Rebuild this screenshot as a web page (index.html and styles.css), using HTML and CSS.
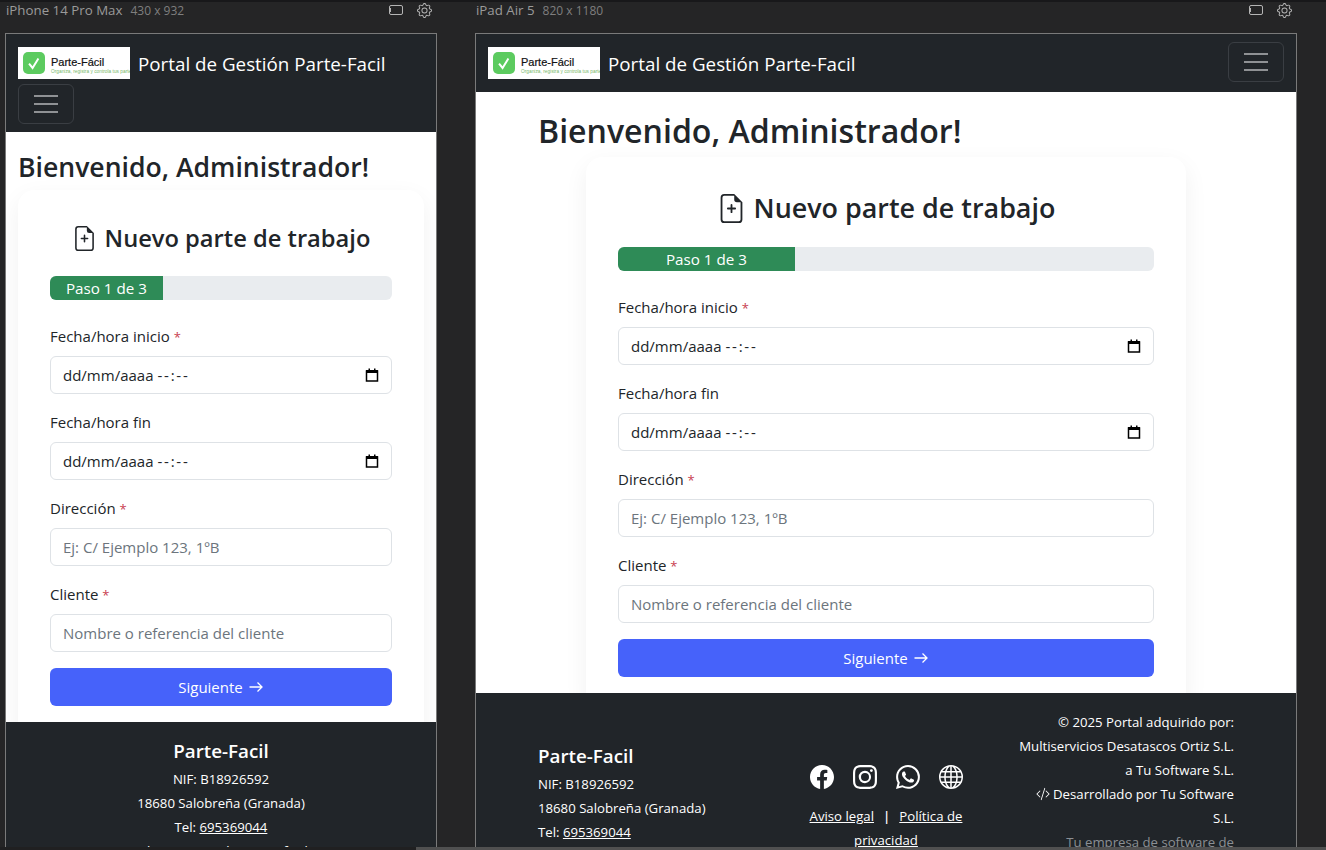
FILE: index.html
```html
<!DOCTYPE html>
<html lang="es">
<head>
    <meta charset="UTF-8">
    <title>Portal de Gestión Parte-Facil</title>
    <link rel="stylesheet" href="styles.css">
</head>
<body>
    <svg class="icon-defs" aria-hidden="true">
        <symbol id="i-frame" viewBox="0 0 14 10"><rect x=".5" y=".5" width="13" height="9" rx="1.5" fill="none" stroke="currentColor"/><path d="M1.5 3v4" stroke="currentColor"/></symbol>
        <symbol id="i-gear" viewBox="0 0 16 16"><path d="M8 4.754a3.246 3.246 0 1 0 0 6.492 3.246 3.246 0 0 0 0-6.492M5.754 8a2.246 2.246 0 1 1 4.492 0 2.246 2.246 0 0 1-4.492 0"/><path d="M9.796 1.343c-.527-1.79-3.065-1.79-3.592 0l-.094.319a.873.873 0 0 1-1.255.52l-.292-.16c-1.64-.892-3.433.902-2.54 2.541l.159.292a.873.873 0 0 1-.52 1.255l-.319.094c-1.79.527-1.79 3.065 0 3.592l.319.094a.873.873 0 0 1 .52 1.255l-.16.292c-.892 1.64.901 3.434 2.541 2.54l.292-.159a.873.873 0 0 1 1.255.52l.094.319c.527 1.79 3.065 1.79 3.592 0l.094-.319a.873.873 0 0 1 1.255-.52l.292.16c1.64.893 3.434-.902 2.54-2.541l-.159-.292a.873.873 0 0 1 .52-1.255l.319-.094c1.79-.527 1.79-3.065 0-3.592l-.319-.094a.873.873 0 0 1-.52-1.255l.16-.292c.893-1.64-.902-3.433-2.541-2.54l-.292.159a.873.873 0 0 1-1.255-.52zm-2.633.283c.246-.835 1.428-.835 1.674 0l.094.319a1.873 1.873 0 0 0 2.693 1.115l.291-.16c.764-.415 1.6.42 1.184 1.185l-.159.292a1.873 1.873 0 0 0 1.116 2.692l.318.094c.835.246.835 1.428 0 1.674l-.319.094a1.873 1.873 0 0 0-1.115 2.693l.16.291c.415.764-.42 1.6-1.185 1.184l-.291-.159a1.873 1.873 0 0 0-2.693 1.116l-.094.318c-.246.835-1.428.835-1.674 0l-.094-.319a1.873 1.873 0 0 0-2.692-1.115l-.292.16c-.764.415-1.6-.42-1.184-1.185l.159-.291A1.873 1.873 0 0 0 1.945 8.93l-.319-.094c-.835-.246-.835-1.428 0-1.674l.319-.094A1.873 1.873 0 0 0 3.06 4.377l-.16-.292c-.415-.764.42-1.6 1.185-1.184l.292.159a1.873 1.873 0 0 0 2.692-1.115z"/></symbol>
        <symbol id="i-file" viewBox="0 0 16 16"><path d="M8.5 6a.5.5 0 0 0-1 0v1.500H6a.5.5 0 0 0 0 1h1.500V10a.5.5 0 0 0 1 0V8.500H10a.5.5 0 0 0 0-1H8.500z"/><path d="M14 4.500V14a2 2 0 0 1-2 2H4a2 2 0 0 1-2-2V2a2 2 0 0 1 2-2h5.500zm-3 0A1.500 1.500 0 0 1 9.500 3V1H4a1 1 0 0 0-1 1v12a1 1 0 0 0 1 1h8a1 1 0 0 0 1-1V4.500z"/></symbol>
        <symbol id="i-cal" viewBox="0 0 14 14"><path d="M1.500 3h11v10h-11z" fill="none" stroke="#000" stroke-width="1.500"/><path d="M1 2h12v3H1zM3.500 .6H5v2H3.500zM9 .6h1.500v2H9z"/></symbol>
        <symbol id="i-arrow" viewBox="0 0 16 16"><path d="M1.500 8H14M9.500 3.500L14 8l-4.500 4.500" fill="none" stroke="currentColor" stroke-width="1.300"/></symbol>
        <symbol id="i-check" viewBox="0 0 20 20"><path d="M5.500 10.500l3.200 4 5.300-8.500" fill="none" stroke="#fff" stroke-width="1.800"/></symbol>
        <symbol id="i-code" viewBox="0 0 16 16"><path d="M10.478 1.647a.5.5 0 1 0-.956-.294l-4 13a.5.5 0 0 0 .956.294zM4.854 4.146a.5.5 0 0 1 0 .708L1.707 8l3.147 3.146a.5.5 0 0 1-.708.708l-3.500-3.500a.5.5 0 0 1 0-.708l3.500-3.500a.5.5 0 0 1 .708 0m6.292 0a.5.5 0 0 0 0 .708L14.293 8l-3.147 3.146a.5.5 0 0 0 .708.708l3.500-3.500a.5.5 0 0 0 0-.708l-3.500-3.500a.5.5 0 0 0-.708 0"/></symbol>
    </svg>

    <div class="topline"></div>
    <div class="devices">

        <section class="device phone">
            <div class="device-bar">
                <span class="device-name">iPhone 14 Pro Max</span>
                <span class="device-size">430 x 932</span>
                <span class="device-tools">
                    <svg class="tool-frame"><use href="#i-frame"/></svg>
                    <svg class="tool-gear"><use href="#i-gear"/></svg>
                </span>
            </div>
            <div class="screen">
                <nav class="navbar navbar-wrap">
                    <div class="brand">
                        <div class="logo">
                            <svg class="logo-mark"><use href="#i-check"/></svg>
                            <span class="logo-text">
                                <span class="logo-name">Parte-Fácil</span>
                                <span class="logo-slogan">Organiza, registra y controla tus partes</span>
                            </span>
                        </div>
                        <span class="brand-title">Portal de Gestión Parte-Facil</span>
                    </div>
                    <button class="toggler"><span></span><span></span><span></span></button>
                </nav>
                <main class="content">
                    <h1 class="welcome">Bienvenido, Administrador!</h1>
                    <div class="card">
                        <h2 class="card-title">
                            <svg class="file-icon"><use href="#i-file"/></svg>
                            Nuevo parte de trabajo
                        </h2>
                        <div class="progress"><div class="progress-bar">Paso 1 de 3</div></div>
                        <div class="field">
                            <label>Fecha/hora inicio <span class="req">*</span></label>
                            <div class="input"><span>dd/mm/aaaa <span class="time">--:--</span></span><svg class="cal"><use href="#i-cal"/></svg></div>
                        </div>
                        <div class="field">
                            <label>Fecha/hora fin</label>
                            <div class="input"><span>dd/mm/aaaa <span class="time">--:--</span></span><svg class="cal"><use href="#i-cal"/></svg></div>
                        </div>
                        <div class="field">
                            <label>Dirección <span class="req">*</span></label>
                            <div class="input placeholder">Ej: C/ Ejemplo 123, 1ºB</div>
                        </div>
                        <div class="field">
                            <label>Cliente <span class="req">*</span></label>
                            <div class="input placeholder">Nombre o referencia del cliente</div>
                        </div>
                        <button class="next">Siguiente <svg class="arrow"><use href="#i-arrow"/></svg></button>
                    </div>
                </main>
                <footer class="footer footer-center">
                    <h5 class="footer-name">Parte-Facil</h5>
                    <p>NIF: B18926592</p>
                    <p>18680 Salobreña (Granada)</p>
                    <p>Tel: <a href="#">695369044</a></p>
                    <p>Email: <a href="#">soporte.web@parte-facil.es</a></p>
                </footer>
            </div>
        </section>

        <section class="device tablet">
            <div class="device-bar">
                <span class="device-name">iPad Air 5</span>
                <span class="device-size">820 x 1180</span>
                <span class="device-tools">
                    <svg class="tool-frame"><use href="#i-frame"/></svg>
                    <svg class="tool-gear"><use href="#i-gear"/></svg>
                </span>
            </div>
            <div class="screen">
                <nav class="navbar">
                    <div class="brand">
                        <div class="logo">
                            <svg class="logo-mark"><use href="#i-check"/></svg>
                            <span class="logo-text">
                                <span class="logo-name">Parte-Fácil</span>
                                <span class="logo-slogan">Organiza, registra y controla tus partes</span>
                            </span>
                        </div>
                        <span class="brand-title">Portal de Gestión Parte-Facil</span>
                    </div>
                    <button class="toggler"><span></span><span></span><span></span></button>
                </nav>
                <main class="content">
                    <h1 class="welcome">Bienvenido, Administrador!</h1>
                    <div class="card">
                        <h2 class="card-title">
                            <svg class="file-icon"><use href="#i-file"/></svg>
                            Nuevo parte de trabajo
                        </h2>
                        <div class="progress"><div class="progress-bar">Paso 1 de 3</div></div>
                        <div class="field">
                            <label>Fecha/hora inicio <span class="req">*</span></label>
                            <div class="input"><span>dd/mm/aaaa <span class="time">--:--</span></span><svg class="cal"><use href="#i-cal"/></svg></div>
                        </div>
                        <div class="field">
                            <label>Fecha/hora fin</label>
                            <div class="input"><span>dd/mm/aaaa <span class="time">--:--</span></span><svg class="cal"><use href="#i-cal"/></svg></div>
                        </div>
                        <div class="field">
                            <label>Dirección <span class="req">*</span></label>
                            <div class="input placeholder">Ej: C/ Ejemplo 123, 1ºB</div>
                        </div>
                        <div class="field">
                            <label>Cliente <span class="req">*</span></label>
                            <div class="input placeholder">Nombre o referencia del cliente</div>
                        </div>
                        <button class="next">Siguiente <svg class="arrow"><use href="#i-arrow"/></svg></button>
                    </div>
                </main>
                <footer class="footer footer-columns">
                    <div class="footer-left">
                        <h5 class="footer-name">Parte-Facil</h5>
                        <p>NIF: B18926592</p>
                        <p>18680 Salobreña (Granada)</p>
                        <p>Tel: <a href="#">695369044</a></p>
                    </div>
                    <div class="footer-mid">
                        <div class="socials">
                            <svg class="social" viewBox="0 0 16 16"><path d="M16 8.049c0-4.446-3.582-8.050-8-8.050C3.580 0-.002 3.603-.002 8.050c0 4.017 2.926 7.347 6.750 7.951v-5.625h-2.030V8.050H6.750V6.275c0-2.017 1.195-3.131 3.022-3.131.876 0 1.791.157 1.791.157v1.980h-1.009c-.993 0-1.303.621-1.303 1.258v1.510h2.218l-.354 2.326H9.250V16c3.824-.604 6.750-3.934 6.750-7.951"/></svg>
                            <svg class="social" viewBox="0 0 16 16"><path d="M8 0C5.829 0 5.556.01 4.703.048 3.850.088 3.269.222 2.760.420a3.900 3.900 0 0 0-1.417.923A3.900 3.900 0 0 0 .42 2.760C.222 3.268.087 3.850.048 4.700.010 5.555 0 5.827 0 8.001c0 2.172.010 2.444.048 3.297.04.852.174 1.433.372 1.942.205.526.478.972.923 1.417.444.445.89.719 1.416.923.51.198 1.090.333 1.942.372C5.555 15.990 5.827 16 8 16s2.444-.01 3.298-.048c.851-.04 1.434-.174 1.943-.372a3.900 3.900 0 0 0 1.416-.923c.445-.445.718-.891.923-1.417.197-.509.332-1.090.372-1.942C15.990 10.445 16 10.173 16 8s-.01-2.445-.048-3.299c-.04-.851-.175-1.433-.372-1.941a3.900 3.900 0 0 0-.923-1.417A3.900 3.900 0 0 0 13.240.42c-.510-.198-1.092-.333-1.943-.372C10.443.010 10.172 0 7.998 0zm-.717 1.442h.718c2.136 0 2.389.007 3.232.046.780.035 1.204.166 1.486.275.373.145.640.319.920.599s.453.546.598.920c.110.281.240.705.275 1.485.039.843.047 1.096.047 3.231s-.008 2.389-.047 3.232c-.035.780-.166 1.203-.275 1.485a2.500 2.500 0 0 1-.599.919c-.28.280-.546.453-.92.598-.28.110-.704.240-1.485.276-.843.038-1.096.047-3.232.047s-2.390-.009-3.233-.047c-.780-.036-1.203-.166-1.485-.276a2.500 2.500 0 0 1-.920-.598 2.500 2.500 0 0 1-.600-.920c-.109-.281-.240-.705-.275-1.485-.038-.843-.046-1.096-.046-3.233s.008-2.388.046-3.231c.036-.780.166-1.204.276-1.486.145-.373.319-.640.599-.920s.546-.453.920-.598c.282-.110.705-.240 1.485-.276.738-.034 1.024-.044 2.515-.045zm4.988 1.328a.960.960 0 1 0 0 1.920.960.960 0 0 0 0-1.920m-4.270 1.122a4.109 4.109 0 1 0 0 8.217 4.109 4.109 0 0 0 0-8.217m0 1.441a2.667 2.667 0 1 1 0 5.334 2.667 2.667 0 0 1 0-5.334"/></svg>
                            <svg class="social" viewBox="0 0 16 16"><path d="M13.601 2.326A7.850 7.850 0 0 0 7.994 0C3.627 0 .068 3.558.064 7.926c0 1.399.366 2.760 1.057 3.965L0 16l4.204-1.102a7.900 7.900 0 0 0 3.790.965h.004c4.368 0 7.926-3.558 7.930-7.930A7.900 7.900 0 0 0 13.600 2.326zM7.994 14.521a6.600 6.600 0 0 1-3.356-.920l-.24-.144-2.494.654.666-2.433-.156-.251a6.560 6.560 0 0 1-1.007-3.505c0-3.626 2.957-6.584 6.591-6.584a6.560 6.560 0 0 1 4.660 1.931 6.560 6.560 0 0 1 1.928 4.660c-.004 3.639-2.961 6.592-6.592 6.592m3.615-4.934c-.197-.099-1.170-.578-1.353-.646-.182-.065-.315-.099-.445.099-.133.197-.513.646-.627.775-.114.133-.232.148-.430.050-.197-.100-.836-.308-1.592-.985-.590-.525-.985-1.175-1.103-1.372-.114-.198-.011-.304.088-.403.087-.088.197-.232.296-.346.100-.114.133-.198.198-.330.065-.134.034-.248-.015-.347-.050-.099-.445-1.076-.612-1.470-.160-.389-.323-.335-.445-.340-.114-.007-.247-.007-.380-.007a.73.730 0 0 0-.529.247c-.182.198-.691.677-.691 1.654s.710 1.916.810 2.049c.098.133 1.394 2.132 3.383 2.992.470.205.840.326 1.129.418.475.152.904.129 1.246.080.380-.058 1.171-.480 1.338-.943.164-.464.164-.860.114-.943-.049-.084-.182-.133-.38-.232"/></svg>
                            <svg class="social" viewBox="0 0 16 16"><path d="M0 8a8 8 0 1 1 16 0A8 8 0 0 1 0 8m7.500-6.923c-.67.204-1.335.820-1.887 1.855A8 8 0 0 0 5.145 4H7.500zM4.090 4a9.300 9.300 0 0 1 .640-1.539 7 7 0 0 1 .597-.933A7.030 7.030 0 0 0 2.255 4zm-.582 3.500c.03-.877.138-1.718.312-2.500H1.674a7 7 0 0 0-.656 2.500zM4.847 5a12.500 12.500 0 0 0-.338 2.500H7.500V5zM8.500 5v2.500h2.990a12.500 12.500 0 0 0-.337-2.500zM4.510 8.500a12.500 12.500 0 0 0 .337 2.500H7.500V8.500zm3.990 0V11h2.653c.187-.765.306-1.608.338-2.500zM5.145 12q.208.580.468 1.068c.552 1.035 1.218 1.650 1.887 1.855V12zm.182 2.472a7 7 0 0 1-.597-.933A9.300 9.300 0 0 1 4.090 12H2.255a7 7 0 0 0 3.072 2.472M3.820 11a13.700 13.700 0 0 1-.312-2.500h-2.490c.062.890.291 1.733.656 2.500zm6.853 3.472A7 7 0 0 0 13.745 12H11.910a9.300 9.300 0 0 1-.640 1.539 7 7 0 0 1-.597.933M8.500 12v2.923c.67-.204 1.335-.820 1.887-1.855q.26-.487.468-1.068zm3.680-1h2.146c.365-.767.594-1.610.656-2.500h-2.490a13.700 13.700 0 0 1-.312 2.500m2.802-3.500a7 7 0 0 0-.656-2.500H12.180c.174.782.282 1.623.312 2.500zM11.270 2.461c.247.464.462.980.640 1.539h1.835a7 7 0 0 0-3.072-2.472c.218.284.418.598.597.933M10.855 4a8 8 0 0 0-.468-1.068C9.835 1.897 9.170 1.282 8.500 1.077V4z"/></svg>
                        </div>
                        <p class="legal"><a href="#">Aviso legal</a><span class="sep">|</span><a href="#">Política de privacidad</a></p>
                    </div>
                    <div class="footer-right">
                        <p>© 2025 Portal adquirido por:</p>
                        <p>Multiservicios Desatascos Ortiz S.L.</p>
                        <p>a Tu Software S.L.</p>
                        <p><svg class="code-icon"><use href="#i-code"/></svg> Desarrollado por Tu Software S.L.</p>
                        <p class="muted">Tu empresa de software de confianza</p>
                    </div>
                </footer>
            </div>
        </section>

    </div>
    <div class="scrollbar"><div class="scrollbar-thumb"></div></div>
</body>
</html>
```

FILE: styles.css
```css
* {
    box-sizing: border-box;
}

html, body {
    height: 850px;
    overflow: hidden;
}

body {
    margin: 0;
    background: #252526;
    color: #212529;
    font-family: "Open Sans", "Noto Sans", sans-serif;
    font-size: 15px;
    position: relative;
}

p, h1, h2, h5 {
    margin: 0;
}

a {
    color: inherit;
}

.icon-defs {
    display: none;
}

.topline {
    height: 2px;
    background: #18181a;
}

.devices {
    display: flex;
    gap: 38px;
    padding-left: 5px;
}

.device-bar {
    display: flex;
    align-items: center;
    height: 31px;
    padding-bottom: 15px;
    font-size: 13.3px;
    color: #9a9a9a;
}

.device-name {
    margin-right: 8px;
    margin-left: 1px;
}

.device-size {
    font-size: 12px;
    color: #7f7f7f;
}

.device-tools {
    margin-left: auto;
    display: flex;
    align-items: center;
    gap: 14px;
    padding-right: 5px;
    color: #b5b5b5;
}

.tool-frame {
    width: 14px;
    height: 10px;
}

.tool-gear {
    width: 15px;
    height: 15px;
    fill: #b5b5b5;
}

.screen {
    height: 830px;
    border: 1px solid #7a7a7a;
    border-bottom: 0;
    background: #fff;
    overflow: hidden;
}

.phone {
    width: 432px;
}

.tablet {
    width: 822px;
}

/* navbar */
.navbar {
    display: flex;
    align-items: center;
    justify-content: space-between;
    background: #212529;
    padding: 13px 12px;
    height: 58px;
}

.navbar-wrap {
    flex-wrap: wrap;
    height: 98px;
    align-content: flex-start;
    gap: 5px 0;
}

.brand {
    display: flex;
    align-items: center;
    gap: 8px;
}

.logo {
    width: 112px;
    height: 32px;
    background: #fff;
    display: flex;
    align-items: center;
    gap: 6px;
    padding-left: 5px;
    overflow: hidden;
    flex-shrink: 0;
}

.logo-mark {
    width: 22px;
    height: 22px;
    border-radius: 5px;
    background: #5ccb5f;
    flex-shrink: 0;
}

.logo-text {
    display: flex;
    flex-direction: column;
    white-space: nowrap;
    padding-top: 5px;
}

.logo-name {
    font-family: "Liberation Sans", sans-serif;
    font-size: 11px;
    line-height: 12px;
    color: #111;
    -webkit-text-stroke: 0.2px #111;
}

.logo-slogan {
    font-family: "Liberation Sans", sans-serif;
    font-size: 4.8px;
    line-height: 7px;
    color: #7ab86a;
}

.brand-title {
    color: #fff;
    font-size: 18.8px;
    white-space: nowrap;
    padding-top: 2px;
}

.toggler {
    width: 56px;
    height: 40px;
    border: 1px solid #3a3e43;
    border-radius: 6px;
    background: transparent;
    padding: 0 15px;
    display: flex;
    flex-direction: column;
    justify-content: center;
    gap: 6px;
}

.tablet .toggler {
    margin-top: -2px;
}

.toggler span {
    display: block;
    height: 2px;
    background: #8f9194;
}

/* main form */
.content {
    padding: 0 12px;
    height: 590px;
}

.tablet .content {
    width: 696px;
    margin: 0 auto;
    padding: 0;
    height: 601px;
}

.welcome {
    font-size: 26.6px;
    font-weight: 600;
    line-height: 38px;
    padding-top: 16px;
    margin-bottom: 4px;
    box-sizing: content-box;
    white-space: nowrap;
}

.tablet .welcome {
    font-size: 32.1px;
    padding-top: 20px;
    margin-bottom: 7px;
}

.card {
    background: #fff;
    border-radius: 16px;
    box-shadow: 0 8px 24px rgba(0, 0, 0, 0.06);
    padding: 32px;
    width: 600px;
    margin: 0 auto;
}

.phone .card {
    width: 100%;
}

.card-title {
    display: flex;
    align-items: center;
    justify-content: center;
    gap: 8px;
    font-size: 26.9px;
    font-weight: 600;
    line-height: 32px;
    margin-bottom: 24px;
    white-space: nowrap;
    padding-top: 3px;
    height: 35px;
}

.phone .card-title {
    margin-bottom: 20px;
    font-size: 23.7px;
    padding: 0 0 2px;
    height: 34px;
}

.file-icon {
    width: 29px;
    height: 29px;
    fill: #212529;
    flex-shrink: 0;
}

.phone .file-icon {
    width: 25px;
    height: 25px;
}

.progress {
    height: 24px;
    background: #e9ecef;
    border-radius: 6px;
    overflow: hidden;
    margin-bottom: 24px;
}

.tablet .progress {
    margin-top: -1px;
}

.progress-bar {
    width: 33%;
    height: 100%;
    background: #2e8b57;
    color: #fff;
    font-size: 15.2px;
    line-height: 25px;
    text-align: center;
}

.field {
    margin-bottom: 16px;
}

.field label {
    display: block;
    margin-bottom: 8px;
    line-height: 24px;
}

.req {
    color: #c8404f;
    font-size: 13px;
    line-height: 1;
}

.input {
    height: 38px;
    border: 1px solid #dee2e6;
    border-radius: 6px;
    background: #fff;
    padding: 0 12px;
    display: flex;
    align-items: center;
    justify-content: space-between;
}

.time {
    letter-spacing: 1.8px;
}

.placeholder {
    color: #6c757d;
}

.cal {
    width: 14px;
    height: 14px;
}

.next {
    width: 100%;
    height: 38px;
    border: 0;
    border-radius: 6px;
    background: #4662fa;
    color: #fff;
    font-family: inherit;
    font-size: 15px;
    display: flex;
    align-items: center;
    justify-content: center;
    gap: 5px;
}

.arrow {
    width: 16px;
    height: 16px;
    color: #fff;
}

/* footer */
.footer {
    background: #212529;
    color: #fff;
    font-size: 13.2px;
    line-height: 24px;
    height: 400px;
}

.footer-name {
    font-size: 18.8px;
    font-weight: 600;
    line-height: 24px;
    margin-bottom: 4px;
}

.footer-center {
    text-align: center;
    padding-top: 17px;
}

.footer-columns {
    display: grid;
    grid-template-columns: 216px 216px 216px;
    column-gap: 24px;
    justify-content: center;
    padding-top: 17px;
}

.footer-left {
    padding-top: 34px;
}

.footer-mid {
    padding-top: 55px;
    text-align: center;
}

.socials {
    display: flex;
    justify-content: center;
    gap: 19px;
    margin-bottom: 15px;
}

.social {
    width: 24px;
    height: 24px;
    fill: #fff;
}

.sep {
    margin: 0 9px;
    font-weight: 600;
}

.footer-right {
    text-align: right;
}

.code-icon {
    width: 14px;
    height: 14px;
    fill: #fff;
    vertical-align: -2px;
}

.muted {
    color: #8b8f93;
}

/* page scrollbar along the bottom edge */
.scrollbar {
    position: absolute;
    left: 0;
    right: 0;
    bottom: 0;
    height: 3px;
    background: #202021;
    padding-left: 416px;
}

.scrollbar-thumb {
    height: 100%;
    background: #505050;
}
```
